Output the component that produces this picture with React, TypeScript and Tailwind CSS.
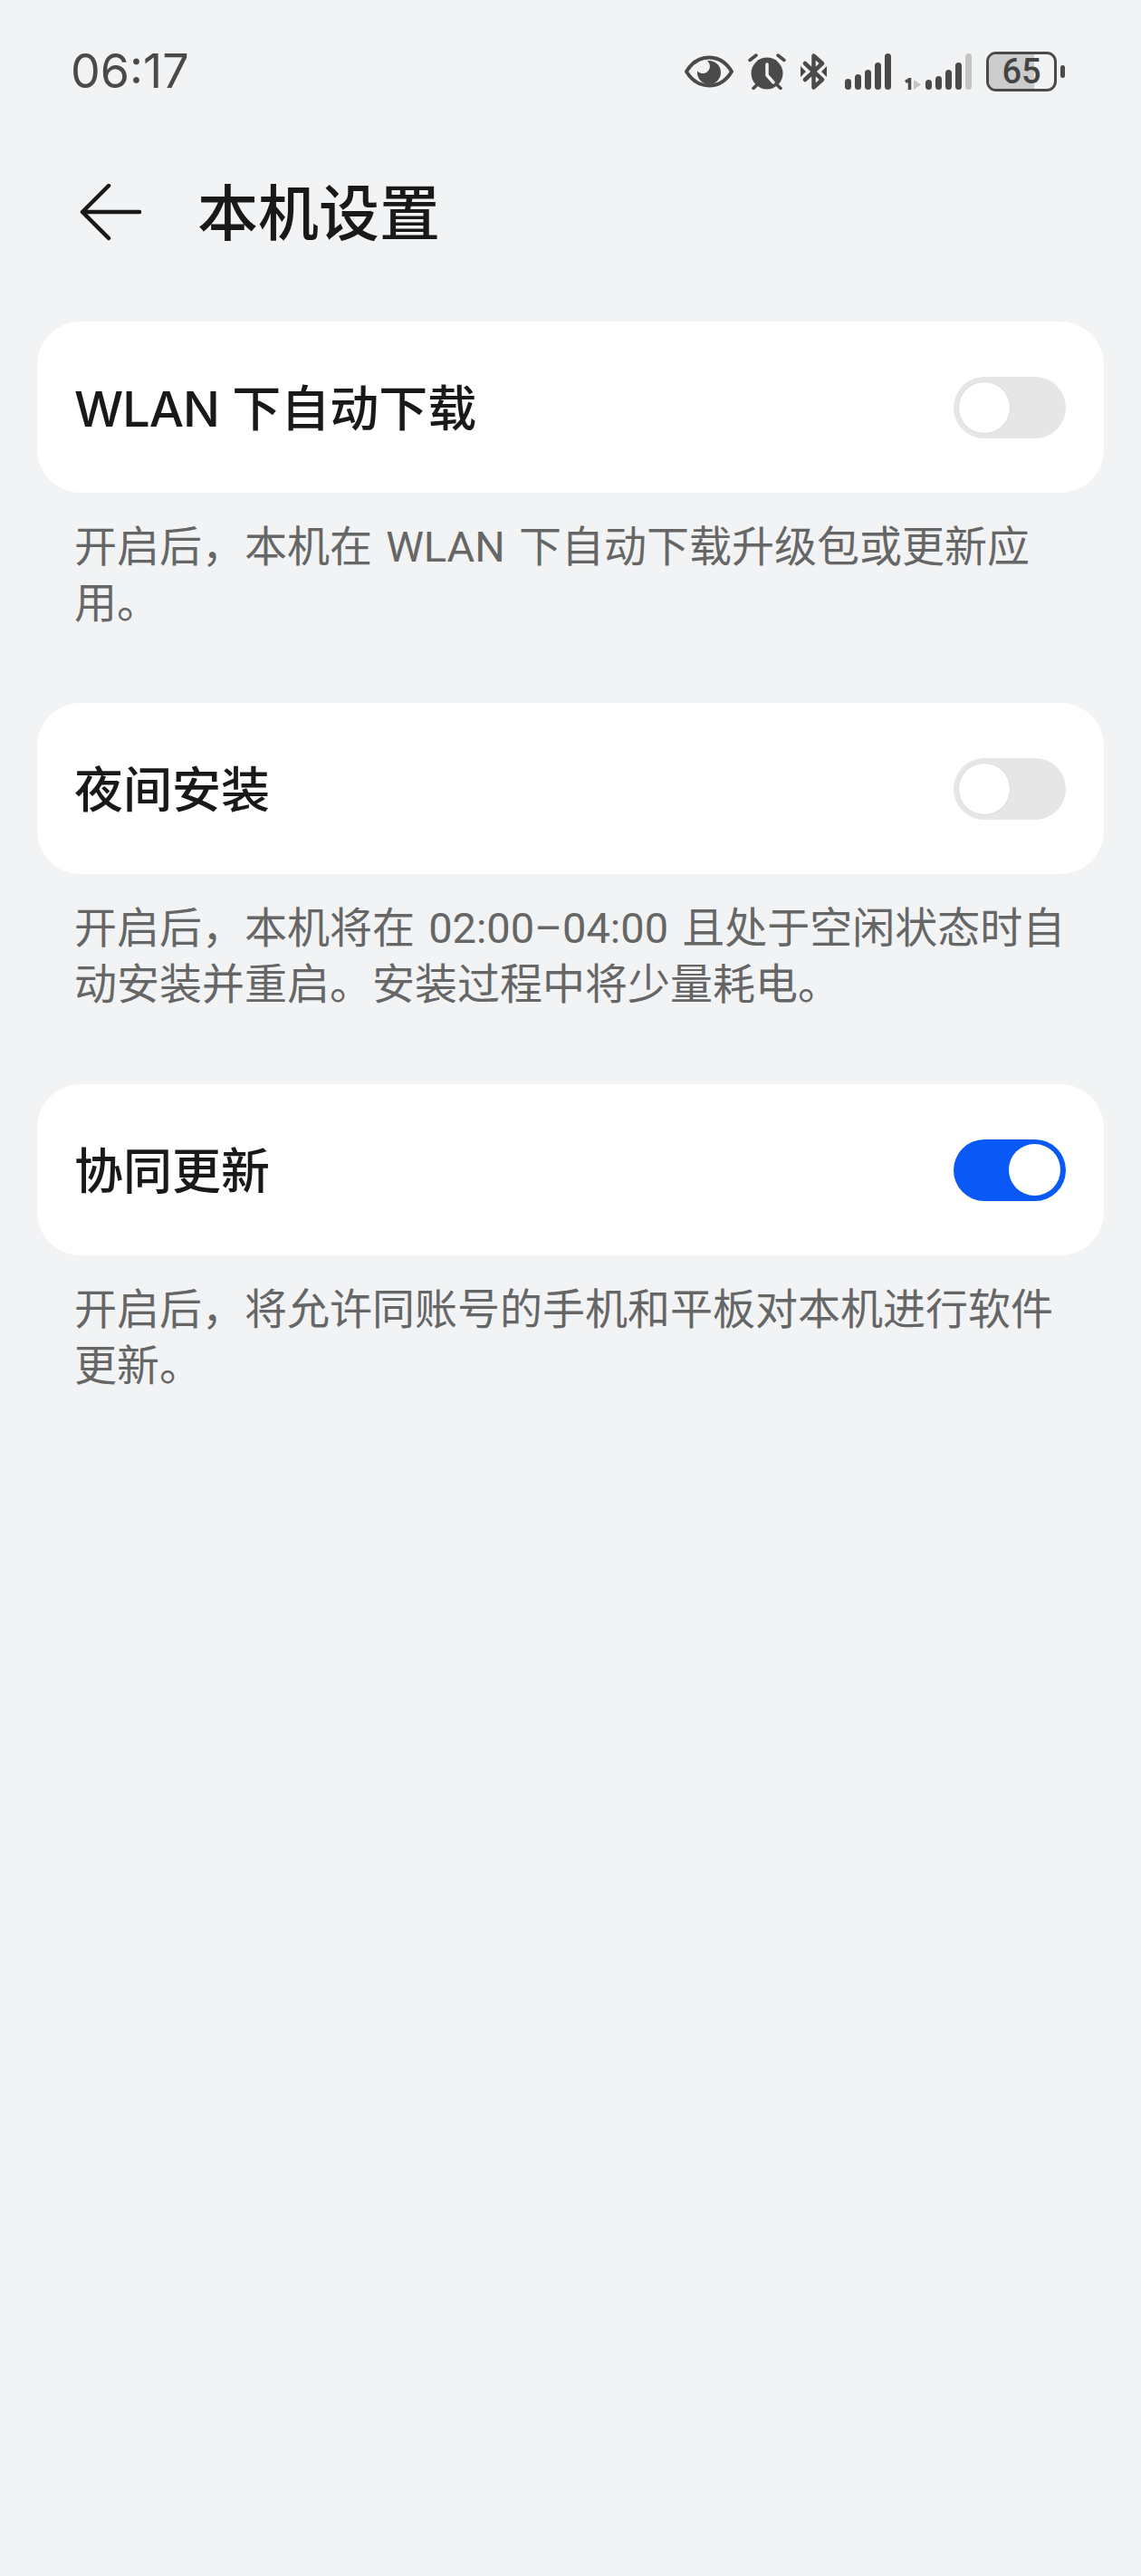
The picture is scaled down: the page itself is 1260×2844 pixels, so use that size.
import React from "react";

const LABEL = "font-['Inter','Noto_Sans_CJK_SC',sans-serif]";
const DESC = "font-['Roboto','Noto_Sans_CJK_SC',sans-serif]";

function Eye() {
  return (
    <svg width="54" height="36" viewBox="0 0 54 36" className="shrink-0">
      <path d="M2 18C8 8 17 2.500 27 2.500S46 8 52 18C46 28 37 33.500 27 33.500S8 28 2 18Z" fill="none" stroke="#4a4a4a" strokeWidth="4" strokeLinejoin="round" />
      <path d="M27 6a13 13 0 1 1-13 13c0-.6 0-1.200.1-1.800 1.400 1.800 3.600 2.900 6 2.900 4.300 0 7.800-3.500 7.800-7.800 0-2.500-1.200-4.700-3-6.200 .7 0 1.400-.1 2.100-.1Z" fill="#4a4a4a" />
    </svg>
  );
}

function Alarm() {
  return (
    <svg width="42" height="40" viewBox="0 0 42 40" className="shrink-0">
      <circle cx="21" cy="22" r="17.500" fill="#4a4a4a" />
      <path d="M21 12v12l7 8" fill="none" stroke="#f1f3f5" strokeWidth="3.500" strokeLinecap="round" strokeLinejoin="round" />
      <path d="M2 7.500 9 2M40 7.500 33 2M6 38.500l4-4M36 38.500l-4-4" stroke="#4a4a4a" strokeWidth="3.500" strokeLinecap="round" />
    </svg>
  );
}

function Bluetooth() {
  return (
    <svg width="30" height="40" viewBox="0 0 30 40" className="shrink-0">
      <path d="M5 11 24 29 14.500 37.500V2.500L24 11 5 29" fill="none" stroke="#4a4a4a" strokeWidth="4.500" strokeLinejoin="round" strokeLinecap="round" />
      <path d="M0 14l6 6-6 6ZM29 14l-6 6 6 6Z" fill="#4a4a4a" />
    </svg>
  );
}

function Bars({ heights, dim }: { heights: number[]; dim?: number }) {
  return (
    <div className="flex h-[40px] items-end gap-[4px]">
      {heights.map((h, i) => (
        <div
          key={i}
          className={i === dim ? "w-[7px] rounded-full bg-[#c4c4c4]" : "w-[7px] rounded-full bg-[#4a4a4a]"}
          style={{ height: h }}
        />
      ))}
    </div>
  );
}

function Sim() {
  return (
    <svg width="18" height="13" viewBox="0 0 18 13" className="shrink-0 self-end">
      <path d="M1 4.500 5.500 1.500V13" fill="none" stroke="#4a4a4a" strokeWidth="3.500" />
      <path d="M10 2v11l8-5.500Z" fill="#c4c4c4" />
    </svg>
  );
}

function Battery() {
  return (
    <div className="flex items-center gap-[4px]">
      <div className="relative flex h-[44px] w-[78px] items-center justify-center overflow-hidden rounded-[11px] border-[3.500px] border-[#4a4a4a]">
        <div className="absolute inset-y-0 left-0 w-[50px] bg-[#cccccc]" />
        <span className={`relative text-[38px] font-medium leading-none text-[#444444] ${DESC}`}>65</span>
      </div>
      <div className="h-[14px] w-[5px] rounded-full bg-[#4a4a4a]" />
    </div>
  );
}

function Toggle({ on }: { on?: boolean }) {
  return on ? (
    <div className="flex h-[68px] w-[124px] items-center justify-end rounded-full bg-[#0a59f7] px-[6px]">
      <div className="h-[57px] w-[57px] rounded-full bg-white" />
    </div>
  ) : (
    <div className="flex h-[68px] w-[124px] items-center rounded-full bg-[#e6e6e6] px-[5px]">
      <div className="h-[58px] w-[58px] rounded-full border-[1px] border-[#dddddd] bg-white" />
    </div>
  );
}

function Section({ label, desc, on }: { label: React.ReactNode; desc: string; on?: boolean }) {
  return (
    <section className="mb-[79px]">
      <div className="flex h-[189px] items-center justify-between rounded-[48px] bg-white pl-[41px] pr-[42px]">
        <span className={`pt-[4px] text-[54px] font-medium leading-none text-[#191919] ${LABEL}`}>{label}</span>
        <Toggle on={on} />
      </div>
      <p className={`px-[41px] pt-[29px] text-[47px] leading-[62px] text-[#666666] [word-spacing:3.500px] ${DESC}`}>{desc}</p>
    </section>
  );
}

export default function App() {
  return (
    <div className={`h-[2844px] w-[1260px] overflow-hidden bg-[#f1f3f5] ${LABEL}`}>
      <div className="flex h-[157px] items-center justify-between pl-[78px] pr-[84px]">
        <span className="text-[52px] leading-none text-[#4a4a4a]">06:17</span>
        <div className="flex items-center">
          <Eye />
          <div className="ml-[16px]"><Alarm /></div>
          <div className="ml-[16px]"><Bluetooth /></div>
          <div className="ml-[19px]"><Bars heights={[12, 17, 22, 30, 40]} /></div>
          <div className="ml-[15px] flex items-end gap-[5px]">
            <Sim />
            <Bars heights={[11, 15, 22, 30, 40]} dim={4} />
          </div>
          <div className="ml-[16px]"><Battery /></div>
        </div>
      </div>
      <header className="flex h-[156px] items-center pl-[88px]">
        <svg width="70" height="64" viewBox="0 0 70 64" className="shrink-0">
          <path d="M32 2 3 31l29 29M3 31h63" fill="none" stroke="#191919" strokeWidth="4.500" strokeLinecap="round" strokeLinejoin="round" />
        </svg>
        <h1 className="ml-[60px] text-[67px] font-medium leading-none text-[#191919]">本机设置</h1>
      </header>
      <main className="mt-[42px] px-[41px]">
        <Section label={<><span className="tracking-[-1px]">WLAN</span> 下自动下载</>} desc="开启后，本机在 WLAN 下自动下载升级包或更新应用。" />
        <Section label="夜间安装" desc="开启后，本机将在 02:00–04:00 且处于空闲状态时自动安装并重启。安装过程中将少量耗电。" />
        <Section label="协同更新" desc="开启后，将允许同账号的手机和平板对本机进行软件更新。" on />
      </main>
    </div>
  );
}
